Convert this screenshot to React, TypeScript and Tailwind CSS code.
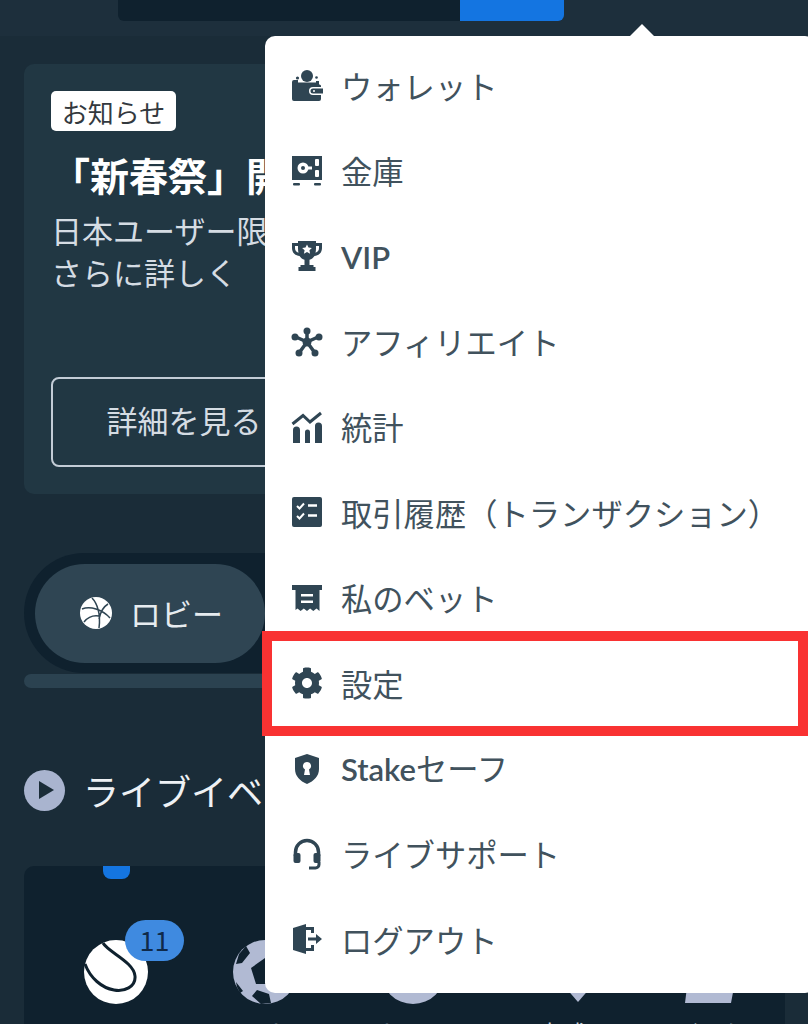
import { FaCog } from 'react-icons/fa'

const NAVY = '#2f4553'

function WalletIcon() {
  return (
    <svg viewBox="0 0 32 32" className="h-8 w-8" fill={NAVY}>
      <circle cx="16" cy="6" r="6" />
      <circle cx="6.5" cy="8" r="1.6" />
      <circle cx="25.5" cy="7.5" r="1.3" />
      <path d="M3 10h4v2.500h18V11h3v3.500c1 0 2 .5 2 1.500v1h-8a4 4 0 0 0 0 8h8v4a2 2 0 0 1-2 2H3a2 2 0 0 1-2-2V12a2 2 0 0 1 2-2z" />
      <path fillRule="evenodd" d="M22 18.500h10v5H22a2.500 2.500 0 0 1 0-5zm1 1.500a1 1 0 1 0 0 2 1 1 0 0 0 0-2z" />
    </svg>
  )
}

function SafeIcon() {
  return (
    <svg viewBox="0 0 32 32" className="h-8 w-8">
      <rect x="1" y="1" width="30" height="24" fill={NAVY} />
      <circle cx="12" cy="13" r="5.500" fill="#fff" />
      <circle cx="12" cy="13" r="2" fill={NAVY} />
      <rect x="16" y="11.500" width="5" height="3" fill="#fff" />
      <rect x="24" y="4" width="4" height="7" rx="1" fill="#fff" />
      <rect x="24" y="15" width="4" height="7" rx="1" fill="#fff" />
      <rect x="2" y="28" width="7" height="2.500" rx="1" fill={NAVY} />
      <rect x="23" y="28" width="7" height="2.500" rx="1" fill={NAVY} />
    </svg>
  )
}

function TrophyIcon() {
  return (
    <svg viewBox="0 0 32 32" className="h-8 w-8" fill={NAVY}>
      <path fillRule="evenodd" d="M7 1h18v2h6v5c0 4.500-3 7.500-7.500 8-1.300 2-3 3.200-5 3.700V25h4v2h2v4H7.500v-4h2v-2h4v-5.300c-2-.5-3.700-1.700-5-3.700C4 15.500 1 12.500 1 8V3h6V1zM4 6v2c0 2.500 1.300 4 3.500 4.700C7.200 11.500 7 10 7 8.500V6H4zm21 0v2.500c0 1.500-.2 3-.5 4.200C26.700 12 28 10.500 28 8V6h-3z" />
      <path fill="#fff" d="M16 4.500l1.500 3.100 3.400.4-2.500 2.300.7 3.400-3.100-1.700-3.100 1.700.7-3.400L11.100 8l3.400-.4z" />
    </svg>
  )
}

function AffiliateIcon() {
  return (
    <svg viewBox="0 0 32 32" className="h-8 w-8" fill={NAVY} stroke={NAVY}>
      <g strokeWidth="3.500">
        <path d="M16 16V5M16 16L5 11M16 16L27 11M16 16L8 27M16 16L24 27" />
      </g>
      <circle cx="16" cy="5" r="3.500" strokeWidth="0" />
      <circle cx="4" cy="11" r="3.500" strokeWidth="0" />
      <circle cx="28" cy="11" r="3.500" strokeWidth="0" />
      <circle cx="8" cy="27" r="3.500" strokeWidth="0" />
      <circle cx="24" cy="27" r="3.500" strokeWidth="0" />
      <circle cx="16" cy="16" r="4.500" strokeWidth="0" />
    </svg>
  )
}

function StatsIcon() {
  return (
    <svg viewBox="0 0 32 32" className="h-8 w-8" fill={NAVY}>
      <path d="M1.500 13L12 4.500l7 6.500L30 2" fill="none" stroke={NAVY} strokeWidth="3" />
      <path d="M2 32V19a3.500 3.500 0 0 1 7 0v13zM14 32V21a2.500 2.500 0 0 1 5 0v11zM24 32V15a3.500 3.500 0 0 1 7 0v17z" />
    </svg>
  )
}

function ChecklistIcon() {
  return (
    <svg viewBox="0 0 32 32" className="h-8 w-8">
      <rect x="1" y="1" width="30" height="30" rx="2" fill={NAVY} />
      <path d="M6 10l2.500 2.500L13 7.500M6 20l2.500 2.500L13 17.500" fill="none" stroke="#fff" strokeWidth="2" />
      <path d="M17 9.500h9M17 19.500h9" fill="none" stroke="#fff" strokeWidth="2.500" />
    </svg>
  )
}

function BetsIcon() {
  return (
    <svg viewBox="0 0 32 32" className="h-8 w-8" fill={NAVY}>
      <path fillRule="evenodd" d="M1 3h30v5h-2.500v21l-3-2.500-3.200 2.500-3.200-2.500-3.100 2.500-3.200-2.500-3.200 2.500-3.100-2.500-2 1.600V8H1V3zm9 9v2.500h12V12H10zm0 6.500V21h12v-2.500H10z" />
    </svg>
  )
}

function ShieldIcon() {
  return (
    <svg viewBox="0 0 32 32" className="h-8 w-8" fill={NAVY}>
      <path fillRule="evenodd" d="M16 1l12 4v11c0 7-5 12-12 15C9 28 4 23 4 16V5l12-4zm0 8a4 4 0 0 0-2 7.500L13 22h6l-1-5.500A4 4 0 0 0 16 9z" />
    </svg>
  )
}

function HeadsetIcon() {
  return (
    <svg viewBox="0 0 32 32" className="h-8 w-8" fill={NAVY}>
      <path d="M4.500 18v-4a11.500 11.500 0 0 1 23 0v4" fill="none" stroke={NAVY} strokeWidth="3.500" />
      <rect x="2.500" y="15" width="7" height="10" rx="2" />
      <rect x="22.500" y="15" width="7" height="10" rx="2" />
      <path d="M28 24v2.500a3.500 3.500 0 0 1-3.500 3.500H18" fill="none" stroke={NAVY} strokeWidth="3" />
    </svg>
  )
}

function LogoutIcon() {
  return (
    <svg viewBox="0 0 32 32" className="h-8 w-8" fill={NAVY}>
      <path d="M2 5l13-4v30L2 27z" />
      <path d="M15 4h8v6h-3V7h-5zM15 25h5v-3h3v6h-8z" />
      <path d="M17 14.500h8V11l6 5-6 5v-3.500h-8z" />
    </svg>
  )
}

function BasketballIcon() {
  return (
    <svg viewBox="0 0 32 32" className="h-8 w-8">
      <circle cx="16" cy="16" r="16" fill="#fff" />
      <path d="M2 12c8-3 20 0 28 9M12 1c5 5 9 16 7 30M28 7c-5 3-8 10-9 15M4 25c4-5 9-7 15-6" fill="none" stroke="#2f4553" strokeWidth="1.500" />
    </svg>
  )
}

function TennisIcon() {
  return (
    <svg viewBox="0 0 64 64" className="h-[64px] w-[64px]">
      <circle cx="32" cy="32" r="32" fill="#fff" />
      <path d="M19 3c5 9 31 19 32 33 1 11-11 16-21 14C18 48 6 38 1 24" fill="none" stroke="#0f212e" strokeWidth="3" />
    </svg>
  )
}

function SoccerIcon() {
  return (
    <svg viewBox="0 0 64 64" className="h-[64px] w-[64px]">
      <circle cx="32" cy="32" r="32" fill="#b1bad3" />
      <path d="M32 18l14 10-5 16H23l-5-16z" fill="#0f212e" />
      <path d="M13 6L6 14l-3 10 6-1 8-10zM3 42l7 9-3 2-3-6zM24 50l-5 6 9 8 10-1-2-9z" fill="#0f212e" />
    </svg>
  )
}

function BallIcon() {
  return (
    <svg viewBox="0 0 64 64" className="h-[64px] w-[64px]">
      <circle cx="32" cy="32" r="32" fill="#b1bad3" />
    </svg>
  )
}

function DiamondIcon() {
  return (
    <svg viewBox="0 0 64 64" className="h-[64px] w-[64px] translate-x-[16px]">
      <path d="M32 0l26 32-26 30L6 32z" fill="#b1bad3" />
    </svg>
  )
}

function WedgeIcon() {
  return (
    <svg viewBox="0 0 64 64" className="h-[64px] w-[64px]">
      <path d="M14 0h50L52 63H6z" fill="#b1bad3" />
    </svg>
  )
}

const menuItems = [
  { label: 'ウォレット', icon: <WalletIcon /> },
  { label: '金庫', icon: <SafeIcon /> },
  { label: 'VIP', icon: <TrophyIcon />, latin: 'VIP' },
  { label: 'アフィリエイト', icon: <AffiliateIcon /> },
  { label: '統計', icon: <StatsIcon /> },
  { label: '取引履歴（トランザクション）', icon: <ChecklistIcon /> },
  { label: '私のベット', icon: <BetsIcon /> },
  { label: '設定', icon: <FaCog className="h-8 w-8" color={NAVY} /> },
  { label: 'セーフ', icon: <ShieldIcon />, latin: 'Stake' },
  { label: 'ライブサポート', icon: <HeadsetIcon /> },
  { label: 'ログアウト', icon: <LogoutIcon /> },
]

const sports = [
  { label: 'テニス', icon: <TennisIcon /> },
  { label: 'サッカー', icon: <SoccerIcon /> },
  { label: 'たいく', icon: <BallIcon /> },
  { label: '卓球', icon: <DiamondIcon /> },
  { label: 'バスケ', icon: <WedgeIcon /> },
]

export default function App() {
  return (
    <div
      className="relative h-[1024px] w-[808px] overflow-hidden bg-[#1a2c38] text-white"
      style={{ fontFamily: '"Noto Sans CJK JP", sans-serif' }}
    >
      {/* Top bar */}
      <header className="flex h-[36px] items-start bg-[#1d2f3c] pl-[118px]">
        <div className="h-[21px] w-[342px] rounded-bl-md bg-[#0f212e]" />
        <div className="h-[21px] w-[104px] rounded-br-md bg-[#1475e1]" />
      </header>

      <main className="flex flex-col px-[24px] pt-[28px]">
        {/* Notice banner */}
        <section className="flex h-[430px] w-[761px] flex-col items-start rounded-[10px] bg-[#213743] pl-[27px] pt-[27px]">
          <span className="flex h-[40px] w-[125px] items-center justify-center rounded-[5px] bg-white text-[26px] text-[#33393e]">
            お知らせ
          </span>
          <h2 className="mt-[16px] whitespace-nowrap text-[39px] font-bold leading-[54px]">「新春祭」開催</h2>
          <p className="mt-[8px] text-[31px] leading-[42px] text-[#d5dce3]">
            日本ユーザー限定
            <br />
            さらに詳しく
          </p>
          <button className="mt-[84px] flex h-[90px] w-[266px] items-center justify-center rounded-[8px] border-2 border-[#c3ccd6] pb-[3px] text-[31px] text-[#d5dce3]">
            詳細を見る
          </button>
        </section>

        {/* Tabs */}
        <div className="mt-[59px] flex h-[120px] w-[761px] items-center rounded-full bg-[#0f212e] pl-[11px]">
          <div className="flex h-[99px] w-[230px] items-center gap-[18px] rounded-full bg-[#2f4553] pl-[45px] text-[31px] text-[#e6ebef]">
            <BasketballIcon />
            <span>ロビー</span>
          </div>
        </div>
        <div className="mt-px h-[14px] w-[761px] rounded-full bg-[#2b4250]" />

        {/* Live events */}
        <div className="mt-[80px] flex items-center gap-[18px]">
          <span className="flex h-[41px] w-[41px] items-center justify-center rounded-full bg-[#a9b4cf]">
            <svg viewBox="0 0 20 20" className="ml-[3px] h-[20px] w-[20px]" fill="#1a2c38">
              <path d="M3 1l15 9-15 9z" />
            </svg>
          </span>
          <h3 className="text-[36px] leading-[44px] text-[#eef1f4]">ライブイベント</h3>
        </div>

        <section className="relative mt-[54px] h-[300px] w-[761px] rounded-[10px] bg-[#0f212e]">
          <span className="absolute left-[79px] top-0 h-[13px] w-[27px] rounded-b-[8px] bg-[#1475e1]" />
          <div className="flex pl-[18px] pt-[74px]">
            {sports.map((sport) => (
              <div key={sport.label} className="flex w-[150px] flex-col items-center">
                {sport.icon}
                <span className="mt-[12px] text-[24px] leading-[34px] text-[#c9d1dc]">{sport.label}</span>
              </div>
            ))}
          </div>
          <span className="absolute left-[101px] top-[54px] flex h-[41px] w-[59px] items-center justify-center rounded-full bg-[#3f8ae0] text-[27px] text-[#0f2a4a]">
            11
          </span>
        </section>
      </main>

      {/* Account dropdown */}
      <svg viewBox="0 0 26 13" className="absolute left-[629px] top-[24px] h-[13px] w-[26px]" fill="#fff">
        <path d="M13 0l13 13H0z" />
      </svg>
      <nav className="absolute left-[265px] top-[36px] flex h-[957px] w-[550px] flex-col rounded-[10px] bg-white pb-[11px] pt-[7px]">
        {menuItems.map((item) => (
          <div key={item.label} className="flex h-[85.4px] items-center gap-[18px] pl-[26px]">
            {item.icon}
            <span className="text-[31.3px] leading-none text-[#41525d]">
              {item.latin && (
                <span className="text-[31px] font-semibold" style={{ fontFamily: 'Lato, sans-serif' }}>
                  {item.latin}
                </span>
              )}
              {item.label !== 'VIP' && item.label}
            </span>
          </div>
        ))}
      </nav>

      {/* Highlight around the settings row */}
      <div className="absolute left-[262px] top-[631px] h-[105px] w-[546px] border-[10px] border-[#f93232]" />
    </div>
  )
}
